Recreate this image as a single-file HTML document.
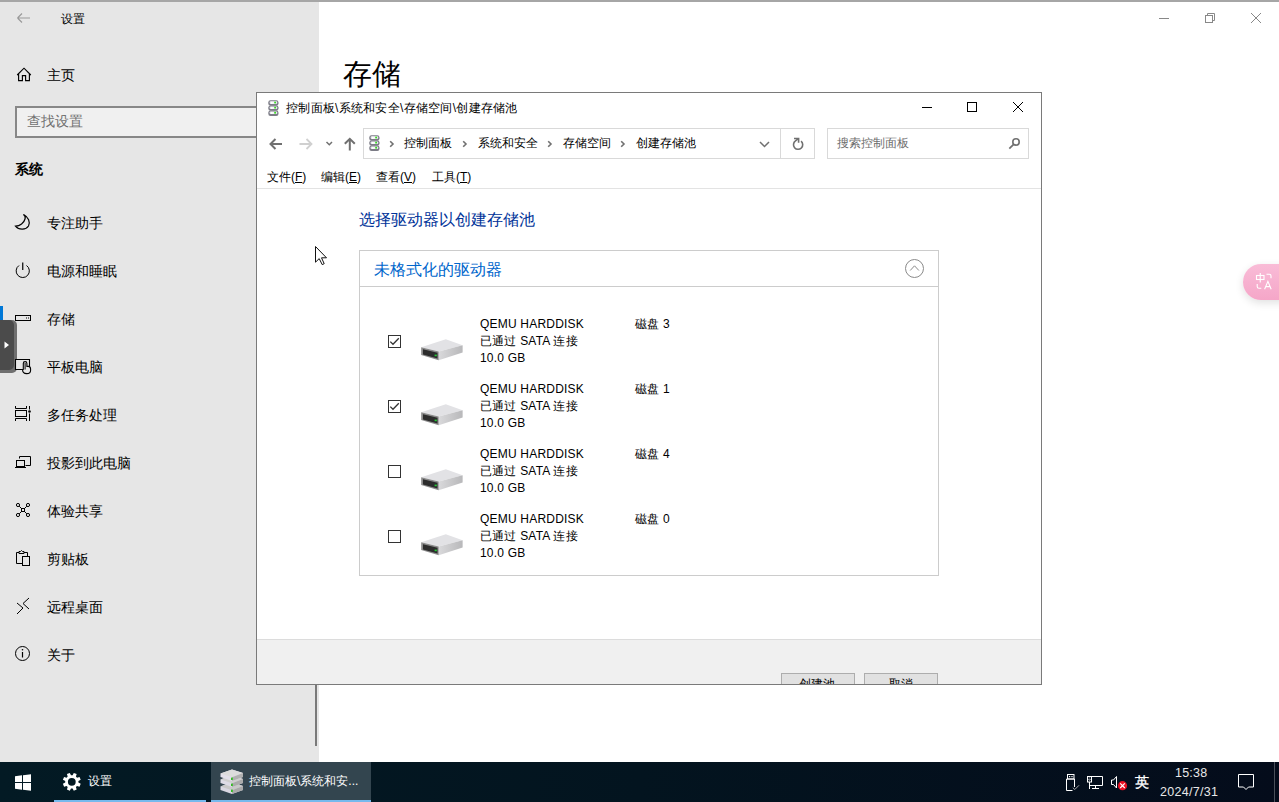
<!DOCTYPE html>
<html><head><meta charset="utf-8">
<style>
*{margin:0;padding:0;box-sizing:border-box}
html,body{width:1279px;height:802px;overflow:hidden;background:#fff;font-family:"Liberation Sans",sans-serif;color:#000}
.a{position:absolute}
.t{position:absolute;white-space:nowrap;line-height:1}
svg{position:absolute;overflow:visible}
#topline{left:0;top:0;width:1279px;height:2px;background:#a6a6a6}
#side{left:0;top:2px;width:319px;height:760px;background:#e6e6e6}
.nav{position:absolute;left:47px;font-size:14px;line-height:16px;color:#000;white-space:nowrap}
#dlg{left:256px;top:92px;width:786px;height:593px;border:1px solid #7a7a7a;background:#fff;overflow:hidden}
#taskbar{left:0;top:762px;width:1279px;height:40px;background:linear-gradient(90deg,#031a24 0%,#03141f 50%,#040c1b 100%)}
.d{font-size:12px;line-height:17px;color:#000;letter-spacing:0.2px}
.u{text-decoration:underline}
</style></head><body>
<div class="a" id="topline"></div>
<div class="a" id="side"></div>

<!-- settings header -->
<svg style="left:16px;top:11px" width="16" height="14" viewBox="0 0 16 14"><path d="M1.5 7H14M1.5 7L6 2.5M1.5 7L6 11.5" stroke="#999" stroke-width="1.1" fill="none"/></svg>
<div class="t" style="left:61px;top:13px;font-size:12px">设置</div>

<!-- home -->
<svg style="left:16px;top:67px" width="16" height="16" viewBox="0 0 16 16"><path d="M1.2 8L8 1.2L14.8 8M2.6 6.5V13.6H6.4V8.6H9.6V13.6H13.4V6.5" stroke="#000" stroke-width="1.15" fill="none"/></svg>
<div class="nav" style="top:67px">主页</div>

<!-- search -->
<div class="a" style="left:15px;top:106px;width:260px;height:32px;border:2px solid #878787;background:#f0f0f0"></div>
<div class="t" style="left:27px;top:114px;font-size:14px;color:#707070">查找设置</div>

<div class="t" style="left:15px;top:162px;font-size:14px;font-weight:bold">系统</div>

<!-- nav icons -->
<svg width="320" height="680" style="left:0;top:0" viewBox="0 0 320 680">
 <g fill="none" stroke="#000" stroke-width="1">
  <path d="M23.5 214.5C28.5 217 30.5 222 28.5 226C26 230 19 230.5 15.5 226.2C20 226 24 223 25 219C25.6 217.3 25 215.6 23.5 214.5Z" stroke-width="1.2"/>
  <path d="M19 265.5A6.6 6.6 0 1 0 26.5 265.5"/>
  <path d="M22.75 262.5V270" stroke-width="1.2"/>
  <rect x="15.5" y="315.5" width="15" height="5"/>
  <path d="M26 318H27M28 318H29"/>
  <path d="M15.5 406V408.5H26.5V406M15.5 421V418.5H26.5V421"/>
  <rect x="15.5" y="410.5" width="11" height="6"/>
  <path d="M29.5 406V409.5M29.5 413.5V421"/>
  <path d="M19.5 458.5V456.5H30.5V465.5H25.5"/>
  <rect x="16.5" y="460.5" width="8" height="6"/>
  <path d="M15 467.5H26"/>
  <circle cx="18" cy="505" r="1.6"/><circle cx="28" cy="505" r="1.6"/><circle cx="18" cy="515" r="1.6"/><circle cx="28" cy="515" r="1.6"/>
  <rect x="21.5" y="508.5" width="3" height="3"/>
  <path d="M19.2 506.2L21.5 508.5M26.8 506.2L24.5 508.5M19.2 513.8L21.5 511.5M26.8 513.8L24.5 511.5"/>
  <path d="M22.5 563.5H16.5V552.5H19M24 552.5H27.5V556"/>
  <path d="M19 553.5V551.5H20.5L21.5 550.5L22.5 551.5H24V553.5Z"/>
  <rect x="22.5" y="556.5" width="7" height="9"/>
  <path d="M17 603L23 608L17 614M29 598L23 603.5L29 609"/>
  <circle cx="22.5" cy="653.5" r="7"/>
  <path d="M22.5 652V657.5" stroke-width="1.2"/>
 </g>
 <circle cx="29.5" cy="411.5" r="1.3" fill="#000"/>
 <circle cx="22.5" cy="649.8" r="0.8" fill="#000"/>
</svg>

<div class="nav" style="top:215px">专注助手</div>
<div class="nav" style="top:263px">电源和睡眠</div>
<div class="a" style="left:0;top:306px;width:3px;height:29px;background:#0078d7"></div>
<div class="nav" style="top:311px">存储</div>
<div class="nav" style="top:359px">平板电脑</div>
<div class="nav" style="top:407px">多任务处理</div>
<div class="nav" style="top:455px">投影到此电脑</div>
<div class="nav" style="top:503px">体验共享</div>
<div class="nav" style="top:551px">剪贴板</div>
<div class="nav" style="top:599px">远程桌面</div>
<div class="nav" style="top:647px">关于</div>

<!-- side tab -->
<div class="a" style="left:-6px;top:320px;width:23px;height:53px;background:#6f6f6f;border-radius:5px"></div>
<div class="a" style="left:-6px;top:320px;width:20px;height:50px;background:#4b4b4b;border-radius:5px"></div>
<svg style="left:4px;top:341px" width="6" height="8" viewBox="0 0 6 8"><path d="M0.5 0.5L5 4L0.5 7.5Z" fill="#fff"/></svg>
<svg width="40" height="40" style="left:0;top:350px" viewBox="0 350 40 40">
 <path d="M15.5 359.5H29.5V369.5H15.5Z" fill="#e6e6e6"/>
 <g fill="none" stroke="#000" stroke-width="1.1">
  <path d="M23 369.5H15.5V359.5H29.5V366.3"/>
 </g>
 <path d="M23.3 369.5V363.5Q23.3 361.6 25.1 361.6Q26.9 361.6 26.9 363.5V366.4H28.6Q30.6 366.6 30.6 369.2V370.2Q30.6 373.6 26.7 373.6Q22.6 373.6 22.6 370Z" fill="#e6e6e6" stroke="#000" stroke-width="1.1"/>
 <path d="M25.1 363V369.5" stroke="#000" stroke-width="1"/>
</svg>

<!-- scroll indicator -->
<div class="a" style="left:315px;top:685px;width:2px;height:61px;background:#7a7a7a"></div>

<!-- content -->
<div class="t" style="left:343px;top:60px;font-size:29px">存储</div>

<!-- settings window controls -->
<svg width="120" height="20" style="left:1150px;top:8px" viewBox="0 0 120 20">
 <g stroke="#888" stroke-width="1" fill="none">
  <path d="M9 10.5H19"/>
  <rect x="55.5" y="7.5" width="7" height="7"/>
  <path d="M57.5 7.5V5.5H64.5V12.5H62.5"/>
  <path d="M101 5L111 15M111 5L101 15"/>
 </g>
</svg>

<!-- translate pill -->
<div class="a" style="left:1243px;top:264px;width:60px;height:36px;border-radius:18px;background:linear-gradient(180deg,#f9bcd7,#f5a6c8);box-shadow:0 3px 8px rgba(0,0,0,0.12)"></div>
<svg width="20" height="20" style="left:1254px;top:272px" viewBox="0 0 20 20">
 <g fill="none" stroke="#fff" stroke-width="1.1">
  <rect x="2.5" y="3.5" width="7.5" height="4"/>
  <path d="M6.25 1V10.5"/>
  <path d="M12.5 2.2H15.3Q17 2.2 17 4V6.2"/>
  <path d="M3.2 12V14.5Q3.2 16.3 5 16.3H7.3"/>
  <path d="M10.6 17.3L13.9 9.4L17.2 17.3M11.7 14.6H16.1"/>
 </g>
</svg>


<div class="a" style="left:256px;top:92px;width:786px;height:593px;background:#fff"></div>
<div class="a" style="left:0;top:0;width:1279px;height:684px;overflow:hidden">
 <!-- title -->
 <svg width="0" height="0" style="left:0;top:0"><defs><linearGradient id="dg" x1="0" y1="0" x2="1" y2="0"><stop offset="0" stop-color="#d8d8e2"/><stop offset="0.25" stop-color="#ffffff"/><stop offset="1" stop-color="#e4e4ee"/></linearGradient></defs></svg><svg width="11" height="16" style="left:267.8px;top:99.6px" viewBox="0 0 11 16"><rect x="0.3" y="0.3" width="10.2" height="5.4" rx="2.2" fill="#7c7c86"/><rect x="1.6" y="1.3" width="7.6" height="2.6" rx="0.8" fill="url(#dg)"/><rect x="6.2" y="1.7" width="1.8" height="1.7" fill="#3bdc22"/><rect x="0.3" y="5.4" width="10.2" height="5.4" rx="2.2" fill="#7c7c86"/><rect x="1.6" y="6.4" width="7.6" height="2.6" rx="0.8" fill="url(#dg)"/><rect x="6.2" y="6.8" width="1.8" height="1.7" fill="#3bdc22"/><rect x="0.3" y="10.5" width="10.2" height="5.4" rx="2.2" fill="#7c7c86"/><rect x="1.6" y="11.5" width="7.6" height="2.6" rx="0.8" fill="url(#dg)"/><rect x="6.2" y="11.9" width="1.8" height="1.7" fill="#3bdc22"/></svg>
 <div class="t" style="left:286px;top:102px;font-size:12px;letter-spacing:0.27px">控制面板\系统和安全\存储空间\创建存储池</div>
 <svg width="120" height="20" style="left:915px;top:97px" viewBox="0 0 120 20">
  <g stroke="#000" stroke-width="1" fill="none">
   <path d="M7 10.5H17"/>
   <rect x="52.5" y="5.5" width="9" height="9"/>
   <path d="M98 5L108 15M108 5L98 15"/>
  </g>
 </svg>
 <!-- nav -->
 <svg width="100" height="20" style="left:265px;top:134px" viewBox="0 0 100 20">
  <g fill="none" stroke-width="2" stroke-linejoin="miter">
   <path d="M5.5 10H17M10.5 5L5.5 10L10.5 15" stroke="#707070"/>
   <path d="M34.5 10H46.5M41.5 5L46.5 10L41.5 15" stroke="#d0d0d0" stroke-width="1.8"/>
   <path d="M61.5 8L64.3 10.7L67 8" stroke="#707070" stroke-width="1.5"/>
   <path d="M84.8 16.5V5M79.8 9.8L84.8 4.8L89.8 9.8" stroke="#707070"/>
  </g>
 </svg>
 <div class="a" style="left:363px;top:128px;width:452px;height:31px;border:1px solid #d9d9d9"></div>
 <div class="a" style="left:780px;top:129px;width:1px;height:29px;background:#d9d9d9"></div>
 <svg width="11" height="16" style="left:368.8px;top:135.2px" viewBox="0 0 11 16"><rect x="0.3" y="0.3" width="10.2" height="5.4" rx="2.2" fill="#7c7c86"/><rect x="1.6" y="1.3" width="7.6" height="2.6" rx="0.8" fill="url(#dg)"/><rect x="6.2" y="1.7" width="1.8" height="1.7" fill="#3bdc22"/><rect x="0.3" y="5.4" width="10.2" height="5.4" rx="2.2" fill="#7c7c86"/><rect x="1.6" y="6.4" width="7.6" height="2.6" rx="0.8" fill="url(#dg)"/><rect x="6.2" y="6.8" width="1.8" height="1.7" fill="#3bdc22"/><rect x="0.3" y="10.5" width="10.2" height="5.4" rx="2.2" fill="#7c7c86"/><rect x="1.6" y="11.5" width="7.6" height="2.6" rx="0.8" fill="url(#dg)"/><rect x="6.2" y="11.9" width="1.8" height="1.7" fill="#3bdc22"/></svg>
 <svg width="420" height="20" style="left:380px;top:134px" viewBox="0 0 420 20">
  <g fill="none" stroke="#707070" stroke-width="1.6">
   <path d="M10.2 7.2L13 10L10.2 12.8"/>
   <path d="M83.2 7.2L86 10L83.2 12.8"/>
   <path d="M168.2 7.2L171 10L168.2 12.8"/>
   <path d="M241.2 7.2L244 10L241.2 12.8"/>
   <path d="M380 8L384.5 12.5L389 8" stroke-width="1.5"/>
  </g>
 </svg>
 <div class="t" style="left:404px;top:137px;font-size:12px">控制面板</div>
 <div class="t" style="left:478px;top:137px;font-size:12px">系统和安全</div>
 <div class="t" style="left:563px;top:137px;font-size:12px">存储空间</div>
 <div class="t" style="left:636px;top:137px;font-size:12px">创建存储池</div>
 <svg width="16" height="16" style="left:790px;top:134px" viewBox="0 0 16 16">
  <path d="M11.06 7.17A4.6 4.6 0 1 1 5.46 6.93L8.3 4.6" fill="none" stroke="#707070" stroke-width="1.6"/>
  <path d="M4 4.5H8.6V8.8" fill="none" stroke="#707070" stroke-width="1.6"/>
 </svg>
 <div class="a" style="left:827px;top:128px;width:202px;height:31px;border:1px solid #d9d9d9"></div>
 <div class="t" style="left:837px;top:137px;font-size:12px;color:#6d6d6d">搜索控制面板</div>
 <svg width="14" height="14" style="left:1007px;top:137px" viewBox="0 0 14 14">
  <circle cx="9" cy="4.9" r="3.2" fill="none" stroke="#707070" stroke-width="1.6"/>
  <path d="M6.6 7.3L2.3 11.6" stroke="#707070" stroke-width="1.7"/>
 </svg>
 <!-- menu -->
 <div class="t" style="left:267px;top:171px;font-size:12px">文件(<span class="u">F</span>)</div>
 <div class="t" style="left:321px;top:171px;font-size:12px">编辑(<span class="u">E</span>)</div>
 <div class="t" style="left:376px;top:171px;font-size:12px">查看(<span class="u">V</span>)</div>
 <div class="t" style="left:432px;top:171px;font-size:12px">工具(<span class="u">T</span>)</div>
 <div class="a" style="left:257px;top:188px;width:784px;height:1px;background:#e3e3e3"></div>
 <!-- body -->
 <div class="t" style="left:359px;top:212px;font-size:16px;color:#003399">选择驱动器以创建存储池</div>
 <div class="a" style="left:359px;top:250px;width:580px;height:326px;border:1px solid #cccccc"></div>
 <div class="a" style="left:360px;top:286px;width:578px;height:1px;background:#cccccc"></div>
 <div class="t" style="left:374px;top:262px;font-size:16px;color:#0066cc">未格式化的驱动器</div>
 <svg width="22" height="22" style="left:903px;top:257px" viewBox="0 0 22 22">
  <circle cx="11.5" cy="11.5" r="9" fill="none" stroke="#8a8a8a" stroke-width="1"/>
  <path d="M7.2 13.5L11.5 8.8L15.9 13.5" fill="none" stroke="#8a8a8a" stroke-width="1"/>
 </svg>
 
 <div class="a" style="left:388px;top:335px;width:13px;height:13px;border:1px solid #333;background:#fff"></div>
 <svg width="13" height="13" style="left:388px;top:335px" viewBox="0 0 13 13"><path d="M2.3 6.6L5 9.3L10.8 3.3" fill="none" stroke="#333" stroke-width="1.3"/></svg>
 <svg width="44" height="26" style="left:420px;top:337px" viewBox="0 0 44 26">
  <defs><linearGradient id="sd0" x1="0" y1="0" x2="1" y2="0"><stop offset="0" stop-color="#d9d9db"/><stop offset="1" stop-color="#b8b8ba"/></linearGradient></defs>
  <path d="M1.2 10.3L25.8 2.2L42.6 8.2L18.7 14.6Z" fill="#e2e2e5"/>
  <path d="M18.7 14.6L42.6 8.2V15.5L18.7 23.3Z" fill="url(#sd0)"/>
  <path d="M1.2 10.3L18.7 14.6V23.3L1.2 18Z" fill="#8a8a8a"/>
  <path d="M3 12.2L17.5 15.8V21.6L3 17.4Z" fill="#2c2c2c"/>
  <rect x="14.6" y="17.6" width="2.2" height="1.6" fill="#22cc33"/>
 </svg>
 <div class="t d" style="left:480px;top:316px">QEMU HARDDISK<br>已通过 SATA 连接<br>10.0 GB</div>
 <div class="t d" style="left:635px;top:316px">磁盘 3</div>
 <div class="a" style="left:388px;top:400px;width:13px;height:13px;border:1px solid #333;background:#fff"></div>
 <svg width="13" height="13" style="left:388px;top:400px" viewBox="0 0 13 13"><path d="M2.3 6.6L5 9.3L10.8 3.3" fill="none" stroke="#333" stroke-width="1.3"/></svg>
 <svg width="44" height="26" style="left:420px;top:402px" viewBox="0 0 44 26">
  <defs><linearGradient id="sd1" x1="0" y1="0" x2="1" y2="0"><stop offset="0" stop-color="#d9d9db"/><stop offset="1" stop-color="#b8b8ba"/></linearGradient></defs>
  <path d="M1.2 10.3L25.8 2.2L42.6 8.2L18.7 14.6Z" fill="#e2e2e5"/>
  <path d="M18.7 14.6L42.6 8.2V15.5L18.7 23.3Z" fill="url(#sd1)"/>
  <path d="M1.2 10.3L18.7 14.6V23.3L1.2 18Z" fill="#8a8a8a"/>
  <path d="M3 12.2L17.5 15.8V21.6L3 17.4Z" fill="#2c2c2c"/>
  <rect x="14.6" y="17.6" width="2.2" height="1.6" fill="#22cc33"/>
 </svg>
 <div class="t d" style="left:480px;top:381px">QEMU HARDDISK<br>已通过 SATA 连接<br>10.0 GB</div>
 <div class="t d" style="left:635px;top:381px">磁盘 1</div>
 <div class="a" style="left:388px;top:465px;width:13px;height:13px;border:1px solid #333;background:#fff"></div>
 <svg width="44" height="26" style="left:420px;top:467px" viewBox="0 0 44 26">
  <defs><linearGradient id="sd2" x1="0" y1="0" x2="1" y2="0"><stop offset="0" stop-color="#d9d9db"/><stop offset="1" stop-color="#b8b8ba"/></linearGradient></defs>
  <path d="M1.2 10.3L25.8 2.2L42.6 8.2L18.7 14.6Z" fill="#e2e2e5"/>
  <path d="M18.7 14.6L42.6 8.2V15.5L18.7 23.3Z" fill="url(#sd2)"/>
  <path d="M1.2 10.3L18.7 14.6V23.3L1.2 18Z" fill="#8a8a8a"/>
  <path d="M3 12.2L17.5 15.8V21.6L3 17.4Z" fill="#2c2c2c"/>
  <rect x="14.6" y="17.6" width="2.2" height="1.6" fill="#22cc33"/>
 </svg>
 <div class="t d" style="left:480px;top:446px">QEMU HARDDISK<br>已通过 SATA 连接<br>10.0 GB</div>
 <div class="t d" style="left:635px;top:446px">磁盘 4</div>
 <div class="a" style="left:388px;top:530px;width:13px;height:13px;border:1px solid #333;background:#fff"></div>
 <svg width="44" height="26" style="left:420px;top:532px" viewBox="0 0 44 26">
  <defs><linearGradient id="sd3" x1="0" y1="0" x2="1" y2="0"><stop offset="0" stop-color="#d9d9db"/><stop offset="1" stop-color="#b8b8ba"/></linearGradient></defs>
  <path d="M1.2 10.3L25.8 2.2L42.6 8.2L18.7 14.6Z" fill="#e2e2e5"/>
  <path d="M18.7 14.6L42.6 8.2V15.5L18.7 23.3Z" fill="url(#sd3)"/>
  <path d="M1.2 10.3L18.7 14.6V23.3L1.2 18Z" fill="#8a8a8a"/>
  <path d="M3 12.2L17.5 15.8V21.6L3 17.4Z" fill="#2c2c2c"/>
  <rect x="14.6" y="17.6" width="2.2" height="1.6" fill="#22cc33"/>
 </svg>
 <div class="t d" style="left:480px;top:511px">QEMU HARDDISK<br>已通过 SATA 连接<br>10.0 GB</div>
 <div class="t d" style="left:635px;top:511px">磁盘 0</div>
 <!-- footer -->
 <div class="a" style="left:257px;top:639px;width:784px;height:1px;background:#dcdcdc"></div>
 <div class="a" style="left:257px;top:640px;width:784px;height:45px;background:#f0f0f0"></div>
 <div class="a" style="left:781px;top:673px;width:74px;height:22px;border:1px solid #adadad;background:#e1e1e1"></div>
 <div class="a" style="left:864px;top:673px;width:74px;height:22px;border:1px solid #adadad;background:#e1e1e1"></div>
 <div class="t" style="left:799px;top:678px;font-size:12px">创建池</div>
 <div class="t" style="left:889px;top:678px;font-size:12px">取消</div>
</div>
<div class="a" style="left:256px;top:92px;width:786px;height:593px;border:1px solid #7a7a7a"></div>


<div class="a" id="taskbar"></div>
<!-- start -->
<svg width="18" height="18" style="left:14px;top:772.5px" viewBox="0 0 18 18">
 <path d="M1 3.2L8 2.3V9H1Z M9 2.15L17 1.2V9H9Z M1 10H8V16.7L1 15.8Z M9 10H17V17.8L9 16.85Z" fill="#fff"/>
</svg>
<!-- settings item -->
<svg width="20" height="20" style="left:62px;top:772px" viewBox="0 0 20 20">
 <g transform="translate(9.8 9.8)">
  <path d="M6.60 0.79 L8.91 2.01 L7.72 4.88 L5.22 4.11 L4.11 5.22 L4.88 7.72 L2.01 8.91 L0.79 6.60 L-0.79 6.60 L-2.01 8.91 L-4.88 7.72 L-4.11 5.22 L-5.22 4.11 L-7.72 4.88 L-8.91 2.01 L-6.60 0.79 L-6.60 -0.79 L-8.91 -2.01 L-7.72 -4.88 L-5.22 -4.11 L-4.11 -5.22 L-4.88 -7.72 L-2.01 -8.91 L-0.79 -6.60 L0.79 -6.60 L2.01 -8.91 L4.88 -7.72 L4.11 -5.22 L5.22 -4.11 L7.72 -4.88 L8.91 -2.01 L6.60 -0.79Z M3.9 0A3.9 3.9 0 1 0 -3.9 0A3.9 3.9 0 1 0 3.9 0Z" fill="#fff" fill-rule="evenodd"/>
 </g>
</svg>
<div class="t" style="left:88px;top:775px;font-size:12px;color:#fff">设置</div>
<div class="a" style="left:54px;top:800px;width:152px;height:2px;background:#76b9ed"></div>
<!-- control panel item -->
<div class="a" style="left:211px;top:762px;width:160px;height:40px;background:#33454f"></div>
<div class="a" style="left:211px;top:800px;width:160px;height:2px;background:#76b9ed"></div>
<svg width="26" height="26" style="left:219px;top:769px" viewBox="0 0 26 26">
 <g>
  <path d="M1.5 17.5L13 13L24 17V21L13 25L1.5 21Z" fill="#d9d7e2"/>
  <path d="M1.5 17.5L13 13L24 17L13 21.2Z" fill="#c8c8c8"/>
  <path d="M13 21.2L24 17V21L13 25Z" fill="#a9a9a9"/>
  <path d="M1.5 10.5L13 6L24 10V14L13 18L1.5 14Z" fill="#dddbe6"/>
  <path d="M1.5 10.5L13 6L24 10L13 14.2Z" fill="#cfcfcf"/>
  <path d="M13 14.2L24 10V14L13 18Z" fill="#ababab"/>
  <path d="M1.5 4.5L13 0.5L24 4V8L13 12L1.5 8Z" fill="#e2e0ea"/>
  <path d="M1.5 4.5L13 0.5L24 4L13 8.2Z" fill="#dcdcdc"/>
  <path d="M13 8.2L24 4V8L13 12Z" fill="#b0b0b0"/>
  <rect x="12" y="8.6" width="1.8" height="2.4" fill="#33bb22"/>
  <rect x="12" y="14.6" width="1.8" height="2.4" fill="#33bb22"/>
  <rect x="12" y="20.6" width="1.8" height="2.4" fill="#33bb22"/>
 </g>
</svg>
<div class="t" style="left:249px;top:775px;font-size:12px;color:#fff">控制面板\系统和安...</div>
<!-- tray -->
<svg width="100" height="20" style="left:1060px;top:772px" viewBox="0 0 100 20">
 <g fill="none" stroke="#fff" stroke-width="1">
  <rect x="7.5" y="2.5" width="6.5" height="4.5"/>
  <path d="M14.5 15V7H6.5V18.5H12.5"/>
  <path d="M14.8 17.5L19 13.3" stroke="#aaa"/><path d="M12.8 15.7L14.8 17.5" stroke="#aaa"/>
 </g>
 <g fill="#fff">
  <rect x="9" y="4" width="1.2" height="1.2"/><rect x="11.4" y="4" width="1.2" height="1.2"/>
 </g>
 <g fill="none" stroke="#fff" stroke-width="1">
  <path d="M31.5 4.5H42.5V13.5H29.5"/>
  <rect x="27.5" y="4.5" width="4" height="5.5"/>
  <path d="M29.5 10V17M35.5 13.5V16.5M32 16.5H39"/>
  <path d="M28.6 7.2L29.5 8.3L30.4 7.2" stroke-width="0.9"/>
  <path d="M28.7 5.9H30.3" stroke-width="0.6"/>
  <path d="M51.5 8H53.5L56.5 4.5V16L53.5 12.5H51.5Z"/>
 </g>
 <circle cx="62.5" cy="13.7" r="4.6" fill="#e81123"/>
 <path d="M60.2 11.4L64.8 16M64.8 11.4L60.2 16" stroke="#fff" stroke-width="1.1"/>
</svg>
<div class="t" style="left:1135px;top:775px;font-size:14px;color:#fff;-webkit-text-stroke:0.35px #fff">英</div>
<div class="t" style="left:1175px;top:767px;font-size:12.5px;letter-spacing:0.2px;color:#e8e8e8">15:38</div>
<div class="t" style="left:1160px;top:786px;font-size:12.5px;letter-spacing:0.3px;color:#e8e8e8">2024/7/31</div>
<svg width="20" height="20" style="left:1236px;top:772px" viewBox="0 0 20 20">
 <path d="M2.5 2.5H17.5V15H12.5L10 17.5L7.5 15H2.5Z" fill="none" stroke="#fff" stroke-width="1"/>
</svg>
<div class="a" style="left:1274px;top:762px;width:1px;height:40px;background:#4a505a"></div>
<!-- cursor -->
<svg width="14" height="20" style="left:315px;top:246px" viewBox="0 0 14 20">
 <path d="M0.5 0.5V16.2L4.2 12.6L7.2 18.6L9.2 17.7L6.5 11.8H11.5Z" fill="#fff" stroke="#111" stroke-width="1" stroke-linejoin="round"/>
</svg>
</body></html>
